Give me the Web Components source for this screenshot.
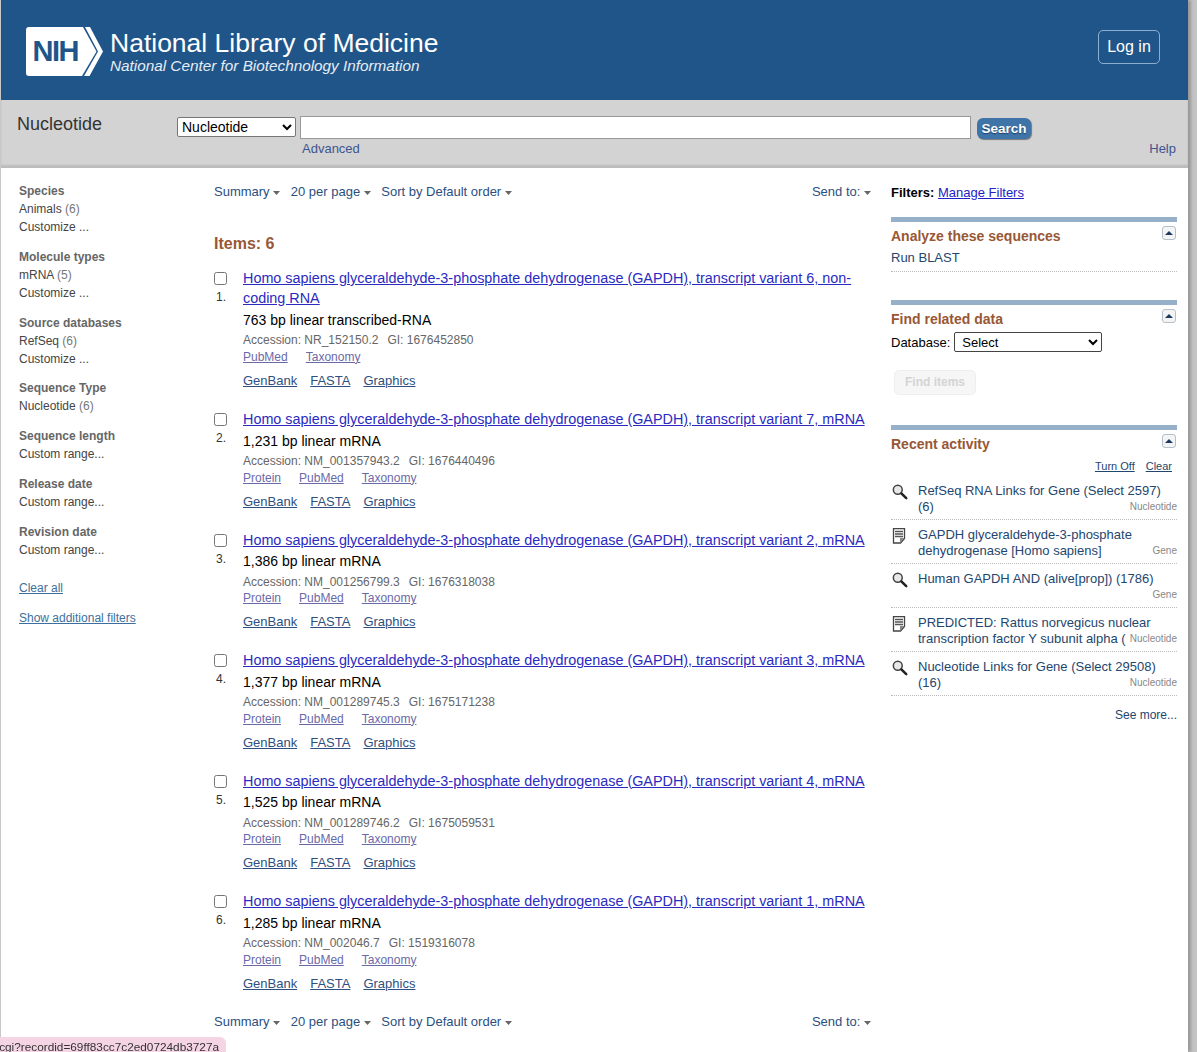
<!DOCTYPE html>
<html lang="en">
<head>
<meta charset="utf-8">
<title>Nucleotide</title>
<style>
  html, body { margin: 0; height: 100%; overflow: hidden; background: #fff; }
  body { font-family: "Liberation Sans", Arial, sans-serif; }
</style>
</head>
<body>
<ncbi-page>
  <ncbi-header slot="header"></ncbi-header>
  <ncbi-search slot="search"></ncbi-search>

  <filter-column slot="left"></filter-column>

  <div slot="center">
    <display-bar></display-bar>
    <items-count>Items: 6</items-count>
    <result-item num="1" acc="NR_152150.2" gi="1676452850" sub="763 bp linear transcribed-RNA" links="PubMed,Taxonomy">Homo sapiens glyceraldehyde-3-phosphate dehydrogenase (GAPDH), transcript variant 6, non-coding RNA</result-item>
    <result-item num="2" acc="NM_001357943.2" gi="1676440496" sub="1,231 bp linear mRNA" links="Protein,PubMed,Taxonomy">Homo sapiens glyceraldehyde-3-phosphate dehydrogenase (GAPDH), transcript variant 7, mRNA</result-item>
    <result-item num="3" acc="NM_001256799.3" gi="1676318038" sub="1,386 bp linear mRNA" links="Protein,PubMed,Taxonomy">Homo sapiens glyceraldehyde-3-phosphate dehydrogenase (GAPDH), transcript variant 2, mRNA</result-item>
    <result-item num="4" acc="NM_001289745.3" gi="1675171238" sub="1,377 bp linear mRNA" links="Protein,PubMed,Taxonomy">Homo sapiens glyceraldehyde-3-phosphate dehydrogenase (GAPDH), transcript variant 3, mRNA</result-item>
    <result-item num="5" acc="NM_001289746.2" gi="1675059531" sub="1,525 bp linear mRNA" links="Protein,PubMed,Taxonomy">Homo sapiens glyceraldehyde-3-phosphate dehydrogenase (GAPDH), transcript variant 4, mRNA</result-item>
    <result-item num="6" acc="NM_002046.7" gi="1519316078" sub="1,285 bp linear mRNA" links="Protein,PubMed,Taxonomy">Homo sapiens glyceraldehyde-3-phosphate dehydrogenase (GAPDH), transcript variant 1, mRNA</result-item>
    <display-bar bottom></display-bar>
  </div>

  <side-column slot="right"></side-column>
</ncbi-page>
<status-tip>cgi?recordid=69ff83cc7c2ed0724db3727a</status-tip>

<script>
function shadow(el, html) {
  el.attachShadow({ mode: "open" });
  el.shadowRoot.innerHTML = html;
}

class NcbiPage extends HTMLElement {
  connectedCallback() {
    shadow(this, `
      <style>
        :host { display: block; height: 1052px; box-sizing: border-box; margin-right: 9px;
                border-left: 1px solid #c8c8c8; box-shadow: 3px 0 3px #999, 9px 0 0 #c4c4c4; background: #fff; }
        .cols { display: grid; grid-template-columns: 213px 657px 306px; }
        .c { min-width: 0; }
        .r { padding-left: 20px; }
      </style>
      <slot name="header"></slot>
      <slot name="search"></slot>
      <div class="cols">
        <div class="c"><slot name="left"></slot></div>
        <div class="c"><slot name="center"></slot></div>
        <div class="c r"><slot name="right"></slot></div>
      </div>
    `);
  }
}

class NcbiHeader extends HTMLElement {
  connectedCallback() {
    shadow(this, `
      <style>
        :host { display: flex; height: 100px; background: #20558a; color: #fff; align-items: flex-start; padding: 27px 28px 0 24px; box-sizing: border-box; }
        .logo { position: relative; width: 78px; height: 50px; flex: none; }
        .logo svg { display: block; }
        .logo span { position: absolute; left: 7.500px; top: 7.500px; font: 700 29px/33px "Liberation Sans", sans-serif; color: #20558a; letter-spacing: -1.500px; }
        .names { margin: 1px 0 0 7px; flex: 1; }
        .t { font-size: 26.500px; line-height: 30px; }
        .s { font-size: 15.300px; line-height: 17px; margin-top: -1px; font-style: italic; color: #e6edf4; }
        .login { width: 62px; height: 34px; margin-top: 3px; box-sizing: border-box; border: 1px solid #8cafd0; border-radius: 5px; text-align: center; line-height: 31px; font-size: 16px; }
      </style>
      <div class="logo">
        <svg width="78" height="50" viewBox="0 0 78 50">
          <path fill="#fff" d="M4 0H58L71.500 24.500 57 49H4A3 3 0 0 1 1 46V3A3 3 0 0 1 4 0Z"/>
          <path fill="#fff" d="M60 0H65L78 24.500 64.500 49H59L73 24.500Z"/>
        </svg>
        <span>NIH</span>
      </div>
      <div class="names">
        <div class="t">National Library of Medicine</div>
        <div class="s">National Center for Biotechnology Information</div>
      </div>
      <div class="login">Log in</div>
    `);
  }
}

class NcbiSearch extends HTMLElement {
  connectedCallback() {
    shadow(this, `
      <style>
        :host { display: block; height: 68px; background: #d3d3d3; box-sizing: border-box; padding-top: 16px; border-bottom: 1px solid #bcbcbc; box-shadow: inset 0 -2px 2px #bbb; color: #333; }
        .row { display: flex; align-items: flex-start; }
        h1 { margin: 0; width: 160px; padding-left: 16px; font: 400 18px/17px "Liberation Sans", sans-serif; color: #333; }
        select { width: 119px; height: 20px; margin-top: 1px; padding: 0; font: 14px "Liberation Sans", sans-serif; background: #fff; border: 1px solid #767676; border-radius: 2px; color: #000; box-sizing: border-box; }
        input { width: 671px; height: 23px; margin-left: 4px; box-sizing: border-box; border: 1px solid #999; background: #fff; padding: 0; }
        button { margin: 2px 0 0 6px; width: 54px; height: 21px; border: 0; border-radius: 6px; background: #3f74a8; color: #fff; font: 700 13.500px/20px "Liberation Sans", sans-serif; padding: 0; text-shadow: 0 1px 1px #1c3f63; box-shadow: 1px 1px 1px #777; }
        .under { display: flex; justify-content: space-between; margin-top: 1px; padding: 0 12px 0 301px; font-size: 13px; line-height: 18px; color: #3d5590; }
      </style>
      <div class="row">
        <h1>Nucleotide</h1>
        <select><option>Nucleotide</option></select>
        <input type="text">
        <button>Search</button>
      </div>
      <div class="under"><span>Advanced</span><span>Help</span></div>
    `);
  }
}

class FilterColumn extends HTMLElement {
  connectedCallback() {
    const groups = [
      ["Species", ["Animals", "(6)"], "Customize ..."],
      ["Molecule types", ["mRNA", "(5)"], "Customize ..."],
      ["Source databases", ["RefSeq", "(6)"], "Customize ..."],
      ["Sequence Type", ["Nucleotide", "(6)"]],
      ["Sequence length", "Custom range..."],
      ["Release date", "Custom range..."],
      ["Revision date", "Custom range..."]
    ];
    const html = groups.map(g => {
      const rows = g.slice(1).map(r => Array.isArray(r)
        ? `<div class="row">${r[0]} <i>${r[1]}</i></div>`
        : `<div class="row">${r}</div>`).join("");
      return `<section><h4>${g[0]}</h4>${rows}</section>`;
    }).join("");
    shadow(this, `
      <style>
        :host { display: block; padding: 14px 0 0 18px; font-size: 12px; line-height: 18px; color: #444; }
        section { margin-bottom: 12px; }
        section:nth-of-type(3) { margin-bottom: 11px; }
        h4 { margin: 0; font: 700 12px/18px "Liberation Sans", sans-serif; color: #666; }
        i { font-style: normal; color: #777; }
        a { display: block; color: #3d6f9e; text-decoration: underline; }
        .clear { margin-top: 20px; }
        .more { margin-top: 12px; }
      </style>
      ${html}
      <a class="clear">Clear all</a>
      <a class="more">Show additional filters</a>
    `);
  }
}

class DisplayBar extends HTMLElement {
  connectedCallback() {
    const caret = `<svg width="7" height="4" viewBox="0 0 7 4"><path fill="#666" d="M0 0H7L3.500 4Z"/></svg>`;
    shadow(this, `
      <style>
        :host { display: flex; height: 18px; padding-top: 15px; font-size: 13px; line-height: 18px; color: #2b4f7f; }
        :host([bottom]) { padding-top: 1px; }
        span { margin-right: 10.500px; }
        svg { vertical-align: 1px; }
        .send { margin: 0 0 0 auto; }
      </style>
      <span>Summary ${caret}</span><span>20 per page ${caret}</span><span>Sort by Default order ${caret}</span>
      <span class="send">Send to: ${caret}</span>
    `);
  }
}

class ItemsCount extends HTMLElement {
  connectedCallback() {
    shadow(this, `
      <style>
        :host { display: block; margin-top: 34px; height: 33px; font: 700 16px/18px "Liberation Sans", sans-serif; color: #985735; }
      </style>
      <slot></slot>
    `);
  }
}

class ResultItem extends HTMLElement {
  connectedCallback() {
    const links = (this.getAttribute("links") || "").split(",").map(l => `<a>${l}</a>`).join("");
    shadow(this, `
      <style>
        :host { display: grid; grid-template-columns: 29px 1fr; margin-bottom: 18.500px; font-size: 14px; }
        :host([num="1"]) { margin-bottom: 19px; }
        .mark { color: #333; font-size: 12px; line-height: 14px; }
        .box { display: block; width: 13px; height: 13px; margin: 4px 0 0 0; box-sizing: border-box; border: 1px solid #767676; border-radius: 2.500px; background: #fff; }
        .num { display: block; margin: 5px 0 0 2px; }
        .title { display: block; font-size: 14.390px; line-height: 20px; color: #2b2bbf; text-decoration: underline; }
        .sub { margin-top: 1.875px; line-height: 20px; color: #000; font-size: 14px; }
        .acc { margin-top: 2.125px; font-size: 12px; line-height: 16px; color: #666; }
        .acc span { margin-left: 9px; }
        .rel { margin-top: .875px; font-size: 12px; line-height: 16px; display: flex; gap: 18px; }
        .rel a { color: #6a6aa8; text-decoration: underline; }
        .fmt { margin-top: 7px; padding-bottom: .125px; font-size: 13px; line-height: 18px; display: flex; gap: 13px; }
        .fmt a { color: #2f4f80; text-decoration: underline; }
      </style>
      <div class="mark"><span class="box"></span><span class="num">${this.getAttribute("num")}.</span></div>
      <div>
        <a class="title"><slot></slot></a>
        <div class="sub">${this.getAttribute("sub")}</div>
        <div class="acc">Accession: ${this.getAttribute("acc")}<span>GI: ${this.getAttribute("gi")}</span></div>
        <div class="rel">${links}</div>
        <div class="fmt"><a>GenBank</a><a>FASTA</a><a>Graphics</a></div>
      </div>
    `);
  }
}

class SidePortlet extends HTMLElement {
  connectedCallback() {
    shadow(this, `
      <style>
        :host { display: block; position: relative; border-top: 5px solid #97b0c9; margin-bottom: 28px; }
        h3 { margin: 0; padding-top: 5px; font: 700 14px/18px "Liberation Sans", sans-serif; color: #985735; }
        .tog { position: absolute; right: 1px; top: 4px; width: 14px; height: 14px; box-sizing: border-box; border: 1px solid #b5bfc9; border-radius: 3px; background: #f4f4f4; display: flex; align-items: center; justify-content: center; }
      </style>
      <h3>${this.getAttribute("heading")}</h3>
      <div class="tog"><svg width="8" height="4" viewBox="0 0 8 4"><path fill="#1c3a5e" d="M4 0L8 4H0Z"/></svg></div>
      <slot></slot>
    `);
  }
}

class RecentRow extends HTMLElement {
  connectedCallback() {
    const search = `<svg width="16" height="16" viewBox="0 0 18 18"><circle cx="6.500" cy="6.500" r="5" fill="#e8e8e8" stroke="#444" stroke-width="1.700"/><path d="M10.500 10.500L16 16" stroke="#222" stroke-width="2.800" stroke-linecap="round"/></svg>`;
    const doc = `<svg width="14" height="16" viewBox="0 0 14 16"><path d="M1.500 .700H12.500V10.500L8.500 15H1.500Z" fill="#fff" stroke="#444" stroke-width="1.300"/><path d="M3 3.500H11M3 6H11M3 8.500H11" stroke="#555" stroke-width="1.300"/><path d="M8 15V10H12.500Z" fill="#888"/></svg>`;
    shadow(this, `
      <style>
        :host { display: grid; grid-template-columns: 27px 1fr; height: 43px; border-bottom: 1px dotted #bbb; position: relative; }
        .ico { padding: 8px 0 0 1px; }
        .txt { padding-top: 7px; height: 32px; font-size: 13px; line-height: 16px; color: #23466e; overflow: hidden; }
        .db { position: absolute; right: 0; top: 23.500px; background: #fff; padding-left: 4px; font-size: 10px; line-height: 14px; color: #888; }
      </style>
      <div class="ico">${this.getAttribute("kind") === "doc" ? doc : search}</div>
      <div class="txt"><slot></slot></div>
      <div class="db">${this.getAttribute("db")}</div>
    `);
  }
}

class SideColumn extends HTMLElement {
  connectedCallback() {
    shadow(this, `
      <style>
        :host { display: block; padding-top: 16px; font-size: 13px; color: #23466e; }
        .filters { height: 18px; line-height: 18px; margin-bottom: 15px; color: #000; font-size: 13px; }
        .filters a { color: #2222c8; text-decoration: underline; }
        .blast { line-height: 18px; padding: 4px 0 4px; border-bottom: 1px dotted #bbb; height: 18px; }
        .related { margin-bottom: 30px; }
        .db { display: flex; align-items: center; height: 20px; margin-top: 4px; color: #000; }
        select { width: 148px; height: 20px; margin-left: 4px; font: 13px "Liberation Sans", sans-serif; background: #fff; border: 1px solid #444; border-radius: 2px; padding: 0 0 0 3px; color: #000; }
        .find { width: 82px; height: 25px; margin: 18px 0 0 3px; box-sizing: border-box; border: 1px solid #eee; border-radius: 5px; background: #f6f6f6; color: #d4d4d4; font: 700 12px/23px "Liberation Sans", sans-serif; text-align: center; }
        .ctl { display: flex; justify-content: flex-end; gap: 11px; padding: 6px 5px 3px 0; font-size: 11px; line-height: 14px; text-decoration: underline; color: #23466e; }
        .more { text-align: right; line-height: 16px; margin-top: 11px; font-size: 12px; }
      </style>
      <div class="filters"><b>Filters:</b> <a>Manage Filters</a></div>
      <side-portlet heading="Analyze these sequences"><div class="blast">Run BLAST</div></side-portlet>
      <side-portlet class="related" heading="Find related data">
        <div class="db">Database: <select><option>Select</option></select></div>
        <div class="find">Find items</div>
      </side-portlet>
      <side-portlet heading="Recent activity">
        <div class="ctl"><span>Turn Off</span><span>Clear</span></div>
        <recent-row kind="search" db="Nucleotide">RefSeq RNA Links for Gene (Select 2597) (6)</recent-row>
        <recent-row kind="doc" db="Gene">GAPDH glyceraldehyde-3-phosphate dehydrogenase [Homo sapiens]</recent-row>
        <recent-row kind="search" db="Gene">Human GAPDH AND (alive[prop]) (1786)</recent-row>
        <recent-row kind="doc" db="Nucleotide">PREDICTED: Rattus norvegicus nuclear transcription factor Y subunit alpha (</recent-row>
        <recent-row kind="search" db="Nucleotide">Nucleotide Links for Gene (Select 29508) (16)</recent-row>
        <div class="more">See more...</div>
      </side-portlet>
    `);
  }
}

class StatusTip extends HTMLElement {
  connectedCallback() {
    shadow(this, `
      <style>
        :host { position: fixed; left: 0; bottom: 0; width: 226px; height: 15px; overflow: hidden; display: flex; justify-content: flex-end; background: #f5d5e3; border-top-right-radius: 6px; font: 11.800px/20px "Liberation Sans", sans-serif; color: #333; white-space: nowrap; }
        span { flex: none; padding-right: 7px; }
      </style>
      <span><slot></slot></span>
    `);
  }
}

customElements.define("ncbi-page", NcbiPage);
customElements.define("ncbi-header", NcbiHeader);
customElements.define("ncbi-search", NcbiSearch);
customElements.define("filter-column", FilterColumn);
customElements.define("display-bar", DisplayBar);
customElements.define("items-count", ItemsCount);
customElements.define("result-item", ResultItem);
customElements.define("side-portlet", SidePortlet);
customElements.define("recent-row", RecentRow);
customElements.define("side-column", SideColumn);
customElements.define("status-tip", StatusTip);
</script>
</body>
</html>
